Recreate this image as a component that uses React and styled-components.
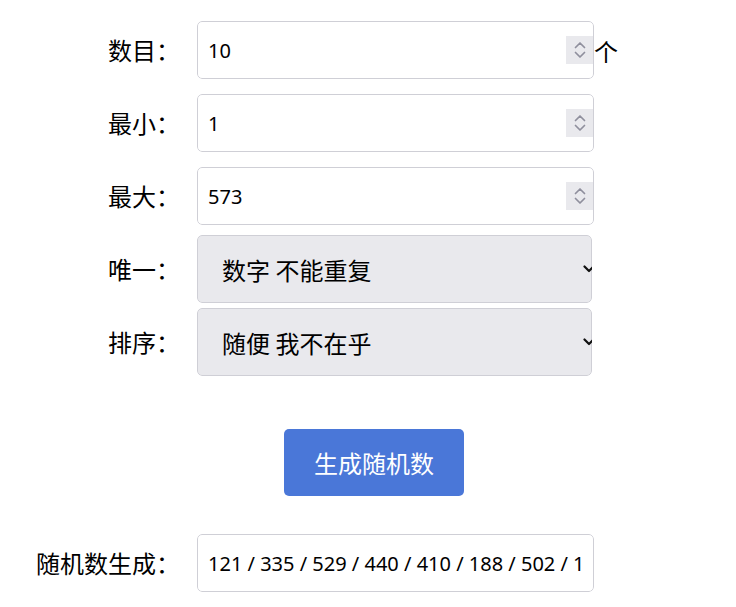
import React from "react";
import styled, { createGlobalStyle } from "styled-components";

const Global = createGlobalStyle`
  html, body { margin: 0; padding: 0; background: #fff; }
  body { margin: 8px; font-family: "Noto Sans", "Noto Sans CJK SC", sans-serif; color: #000; }
  * { box-sizing: border-box; }
`;

const Form = styled.div`
  display: flex;
  flex-direction: column;
  padding-left: 22px;
  padding-top: 13px;
`;

const Row = styled.div`
  display: flex;
  align-items: center;
  gap: 17px;
  margin-top: ${(p) => p.$mt || 0}px;
`;

const Label = styled.label`
  width: 150px;
  flex: none;
  text-align: right;
  font-family: "Noto Sans CJK SC", sans-serif;
  font-size: 24px;
  line-height: 1;
`;

const FieldWrap = styled.div`
  position: relative;
  width: ${(p) => p.$w || 397}px;
  height: ${(p) => p.$h || 58}px;
  flex: none;
  overflow: hidden;
  border-radius: 5px;
`;

const TextInput = styled.input`
  width: 100%;
  height: 100%;
  border: 1px solid #cfcfd6;
  border-radius: 5px;
  background: #fff;
  padding: 0 10px;
  font-family: "Noto Sans", "Noto Sans CJK SC", sans-serif;
  font-size: 20px;
  color: #000;
  outline: none;
`;

const Spinner = styled.div`
  position: absolute;
  right: 1px;
  top: 15px;
  width: 27px;
  height: 28px;
  background: #e9e9ed;
  display: flex;
  align-items: center;
  justify-content: center;
`;

const Unit = styled.span`
  font-family: "Noto Sans CJK SC", sans-serif;
  font-size: 24px;
  margin-left: -17px;
`;

const Select = styled.select`
  appearance: none;
  -webkit-appearance: none;
  width: 100%;
  height: 100%;
  border: 1px solid #cfcfd6;
  border-radius: 5px;
  background: #e9e9ed;
  padding: 0 0 0 24px;
  font-family: "Noto Sans CJK SC", sans-serif;
  font-size: 24px;
  color: #000;
  outline: none;
`;

const Arrow = styled.svg`
  position: absolute;
  right: -3px;
  top: 50%;
  margin-top: -4px;
  pointer-events: none;
`;

const ButtonRow = styled.div`
  display: flex;
  justify-content: flex-start;
  padding-left: 254px;
  margin-top: 53px;
`;

const Button = styled.button`
  width: 180px;
  height: 67px;
  border: none;
  border-radius: 5px;
  background: #4a77d8;
  color: #fff;
  font-family: "Noto Sans CJK SC", sans-serif;
  font-size: 24px;
`;

const SpinIcon = () => (
  <svg width="14" height="22" viewBox="0 0 14 22">
    <path d="M2.5 8.5 L7 4 L11.5 8.5" fill="none" stroke="#8f8f9d" strokeWidth="1.7" strokeLinecap="round" strokeLinejoin="round" />
    <path d="M2.5 13.5 L7 18 L11.5 13.5" fill="none" stroke="#8f8f9d" strokeWidth="1.7" strokeLinecap="round" strokeLinejoin="round" />
  </svg>
);

const NumField = ({ value }) => (
  <FieldWrap>
    <TextInput type="text" defaultValue={value} />
    <Spinner>
      <SpinIcon />
    </Spinner>
  </FieldWrap>
);

const SelectField = ({ value }) => (
  <FieldWrap $w={395} $h={68}>
    <Select defaultValue={value}>
      <option>{value}</option>
    </Select>
    <Arrow width="12" height="8" viewBox="0 0 12 8">
      <path d="M1.5 1.5 L6 6 L10.5 1.5" fill="none" stroke="#111" strokeWidth="2.2" strokeLinecap="round" strokeLinejoin="round" />
    </Arrow>
  </FieldWrap>
);

export default function App() {
  return (
    <>
      <Global />
      <Form>
        <Row>
          <Label>数目：</Label>
          <NumField value="10" />
          <Unit>个</Unit>
        </Row>
        <Row $mt={15}>
          <Label>最小：</Label>
          <NumField value="1" />
        </Row>
        <Row $mt={15}>
          <Label>最大：</Label>
          <NumField value="573" />
        </Row>
        <Row $mt={10}>
          <Label>唯一：</Label>
          <SelectField value="数字 不能重复" />
        </Row>
        <Row $mt={5}>
          <Label>排序：</Label>
          <SelectField value="随便 我不在乎" />
        </Row>
        <ButtonRow>
          <Button>生成随机数</Button>
        </ButtonRow>
        <Row $mt={38}>
          <Label>随机数生成：</Label>
          <FieldWrap>
            <TextInput type="text" readOnly value="121 / 335 / 529 / 440 / 410 / 188 / 502 / 125 / 77 / 301" />
          </FieldWrap>
        </Row>
      </Form>
    </>
  );
}
